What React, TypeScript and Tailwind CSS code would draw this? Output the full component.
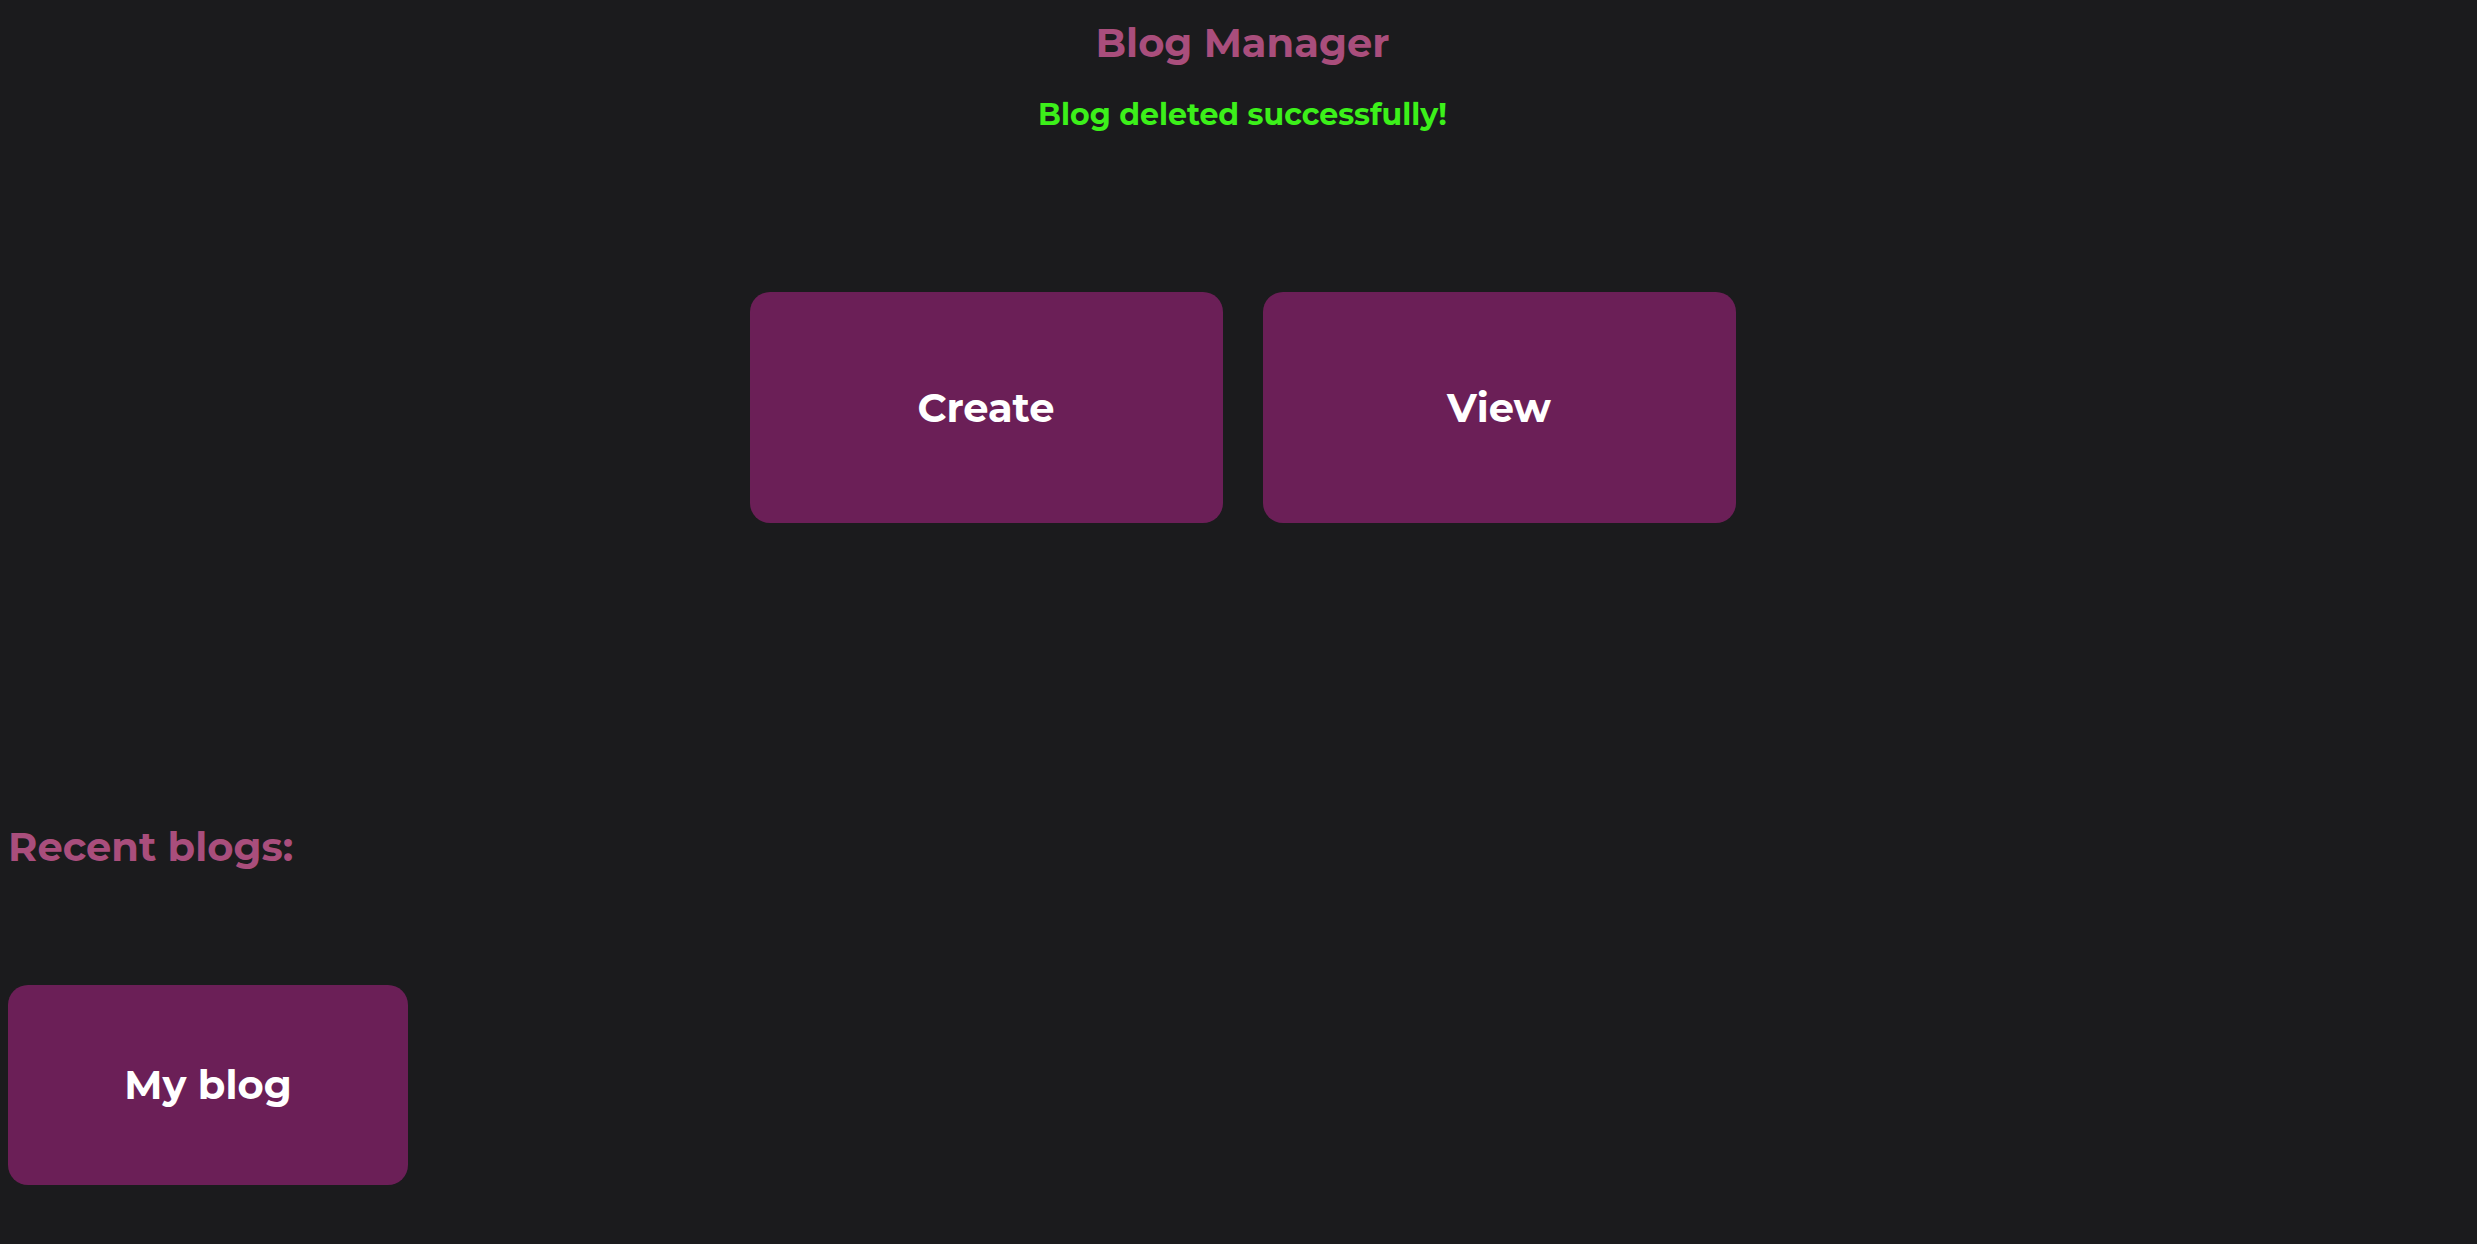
export default function App() {
  const font = "font-['Montserrat','DejaVu_Sans',sans-serif]";

  return (
    <div className={`min-h-screen bg-[#1b1b1d] pl-2 pt-[23px] ${font}`}>
      <h1 className="text-center text-[40px] leading-none font-bold text-[#a94e7c]">
        Blog Manager
      </h1>
      <p className="mt-[37px] text-center text-[30px] leading-none font-bold text-[#3cf01a]">
        Blog deleted successfully!
      </p>

      <div className="mt-[162px] flex justify-center gap-10">
        <button className="flex h-[231px] w-[473px] items-center justify-center rounded-[20px] bg-[#6b1f57] text-[40px] font-bold text-white">
          Create
        </button>
        <button className="flex h-[231px] w-[473px] items-center justify-center rounded-[20px] bg-[#6b1f57] text-[40px] font-bold text-white">
          View
        </button>
      </div>

      <h2 className="mt-[304px] text-[40px] leading-none font-bold text-[#a94e7c]">
        Recent blogs:
      </h2>

      <div className="mt-[118px] flex gap-10">
        <div className="flex h-[200px] w-[400px] items-center justify-center rounded-[20px] bg-[#6b1f57] text-[40px] font-bold text-white">
          My blog
        </div>
      </div>
    </div>
  );
}
